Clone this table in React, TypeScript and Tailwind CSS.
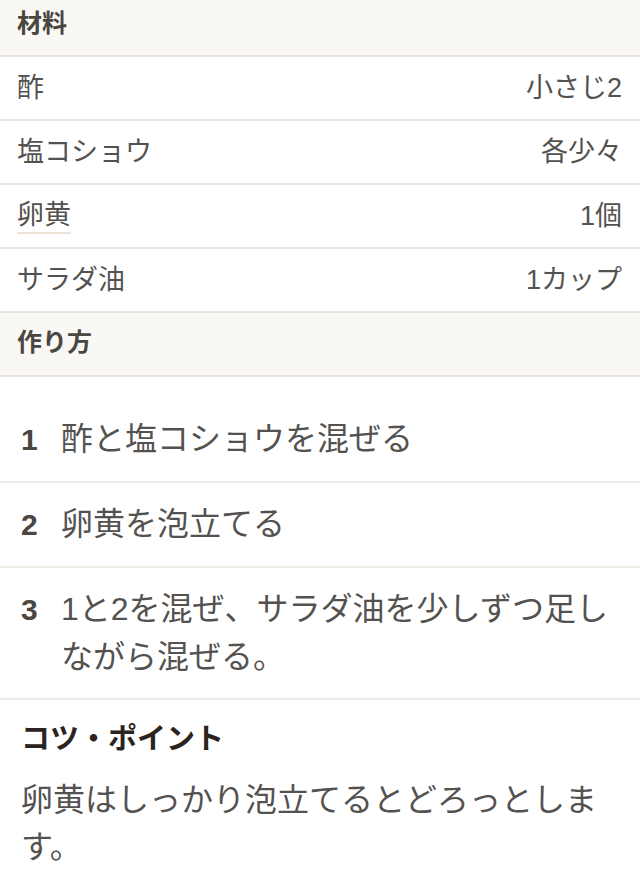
import React from "react";

const font = {
  fontFamily:
    '"Liberation Sans", "Noto Sans CJK JP", "Noto Sans", sans-serif',
};

const ingredients: { name: string; qty: string; link?: boolean }[] = [
  { name: "酢", qty: "小さじ2" },
  { name: "塩コショウ", qty: "各少々" },
  { name: "卵黄", qty: "1個", link: true },
  { name: "サラダ油", qty: "1カップ" },
];

const steps = [
  "酢と塩コショウを混ぜる",
  "卵黄を泡立てる",
  "1と2を混ぜ、サラダ油を少しずつ足しながら混ぜる。",
];

export default function App() {
  return (
    <div className="w-[640px] bg-white" style={font}>
      <div className="h-[57px] bg-[#f9f8f4] border-b-2 border-[#e6e2dc] flex items-center px-[17px] pb-[7px]">
        <span className="text-[25px] font-bold text-[#4a4641]">材料</span>
      </div>
      {ingredients.map((it) => (
        <div
          key={it.name}
          className="h-[64px] border-b-2 border-[#e4e3e1] flex items-center justify-between pl-[17px] pr-[18px] text-[27px] text-[#545250]"
        >
          <span
            className={
              it.link
                ? "border-b-2 border-[#ebe3d8] leading-[34px]"
                : "leading-[34px]"
            }
          >
            {it.name}
          </span>
          <span className="leading-[34px]">{it.qty}</span>
        </div>
      ))}
      <div className="h-[64px] bg-[#f9f8f4] border-b-2 border-[#e6e2dc] flex items-center px-[17px] pb-[2px]">
        <span className="text-[25px] font-bold text-[#4a4641]">作り方</span>
      </div>
      <ol className="pt-[21px]">
        {steps.map((s, i) => (
          <li
            key={i}
            className="flex items-baseline border-b-2 border-[#ecebe4] py-[17px] pl-[21px] pr-[24px]"
          >
            <span className="w-[40px] shrink-0 text-[30px] font-bold text-[#4a4641] leading-[48px]">
              {i + 1}
            </span>
            <span className="text-[32px] text-[#545250] leading-[48px]">
              {s}
            </span>
          </li>
        ))}
      </ol>
      <div className="pt-[18px] pl-[21px] pr-[30px]">
        <h2 className="text-[29px] font-bold text-[#2b2320] leading-[42px]">
          コツ・ポイント
        </h2>
        <p className="mt-[17px] text-[32px] text-[#545250] leading-[47px]">
          卵黄はしっかり泡立てるとどろっとします。
        </p>
      </div>
    </div>
  );
}
